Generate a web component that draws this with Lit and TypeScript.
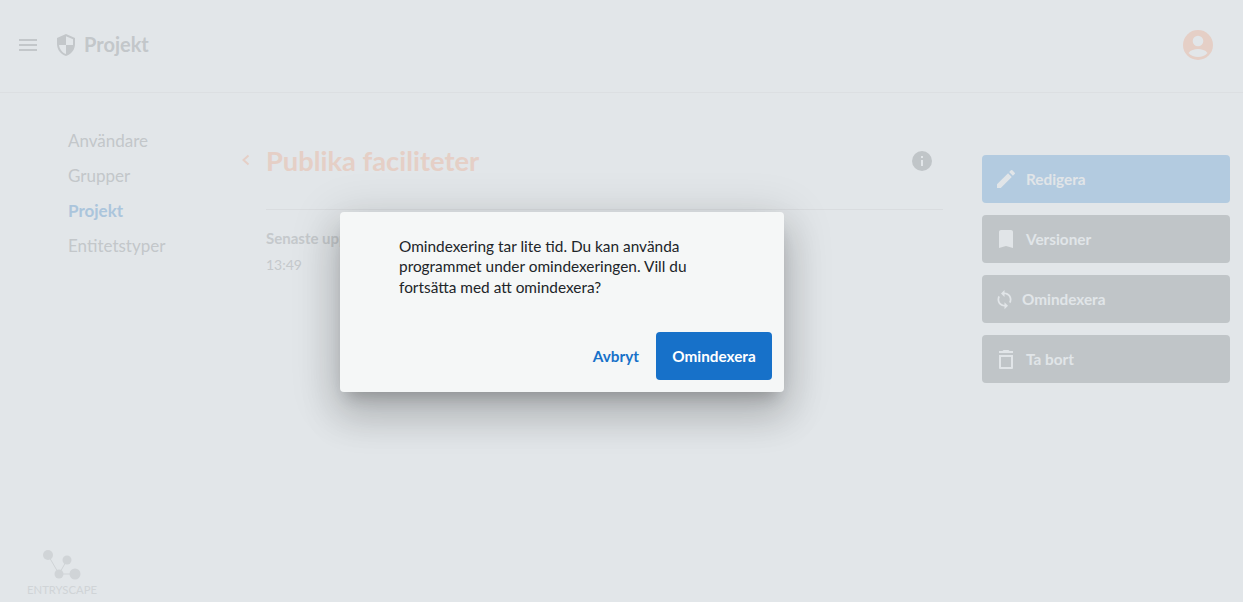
import { LitElement, html, css } from 'lit';
import { customElement } from 'lit/decorators.js';

@customElement('app-root')
export class AppRoot extends LitElement {
  static styles = css`
    :host {
      display: block;
      position: relative;
      width: 1243px;
      height: 602px;
      overflow: hidden;
      background: #e2e6e9;
      font-family: Lato, 'Noto Sans', sans-serif;
    }

    .header {
      height: 93px;
      border-bottom: 1px solid #dcdfe2;
      display: flex;
      align-items: center;
      padding: 0 18px 2px 19px;
      box-sizing: border-box;
    }

    .menu {
      width: 20px;
      height: 20px;
    }

    .shield {
      width: 24px;
      height: 24px;
      margin-left: 15px;
      transform: scaleX(-1);
    }

    .app-title {
      margin: 0 0 2px 6px;
      font-size: 20px;
      font-weight: 700;
      color: #c3c7ca;
      flex: 1;
    }

    .avatar {
      width: 30px;
      height: 30px;
      margin-right: 12px;
    }

    .body {
      display: flex;
      height: 509px;
    }

    .side {
      width: 266px;
      box-sizing: border-box;
      padding: 30px 0 0 68px;
      display: flex;
      flex-direction: column;
    }

    .side a {
      display: block;
      height: 35px;
      line-height: 35px;
      font-size: 17px;
      color: #c3c7ca;
    }

    .side a.on {
      color: #abc5dc;
      font-weight: 700;
    }

    .main {
      width: 677px;
    }

    .title-row {
      position: relative;
      height: 117px;
      border-bottom: 1px solid #d9dcdf;
      box-sizing: border-box;
      display: flex;
      align-items: flex-start;
      padding-top: 49px;
    }

    .back {
      position: absolute;
      left: -26px;
      top: 60px;
      width: 12px;
      height: 14px;
    }

    h1 {
      margin: 0;
      flex: 1;
      font-size: 27.3px;
      line-height: 38px;
      font-weight: 700;
      color: #e5cfc6;
    }

    .info {
      width: 20px;
      height: 20px;
      margin: 9px 11px 0 0;
    }

    .meta {
      margin-top: 19px;
      font-size: 14px;
      line-height: 18px;
      color: #c5c9cc;
    }

    .meta b {
      display: block;
      margin-bottom: 9px;
      font-size: 15px;
    }

    .actions {
      width: 248px;
      margin-left: 39px;
      padding-top: 62px;
      display: flex;
      flex-direction: column;
      gap: 12px;
    }

    .btn {
      height: 48px;
      border-radius: 4px;
      background: #c0c5c8;
      color: #e1e5e8;
      font-size: 15.3px;
      font-weight: 700;
      display: flex;
      align-items: center;
      padding-left: 12px;
      box-sizing: border-box;
    }

    .btn.primary {
      background: #b3cbe0;
    }

    .btn svg {
      width: 24px;
      height: 24px;
      margin-right: 8px;
      fill: #e1e5e8;
      flex: none;
    }

    .btn.tight svg {
      width: 21px;
      height: 21px;
      margin-right: 7px;
    }

    .logo {
      position: absolute;
      left: 26px;
      bottom: 6px;
      width: 72px;
      text-align: center;
      font-size: 11.3px;
      line-height: 12px;
      color: #d0d4d7;
    }

    .logo svg {
      display: block;
      width: 72px;
      height: 32px;
      margin-bottom: 3px;
    }

    .dialog {
      position: absolute;
      left: 340px;
      top: 212px;
      width: 444px;
      height: 180px;
      box-sizing: border-box;
      padding: 24px 12px 12px 59px;
      border-radius: 4px;
      background: #f5f7f7;
      box-shadow:
        0 11px 15px -7px rgba(0, 0, 0, 0.2),
        0 24px 38px 3px rgba(0, 0, 0, 0.14),
        0 9px 46px 8px rgba(0, 0, 0, 0.12);
      display: flex;
      flex-direction: column;
    }

    .dialog p {
      margin: 0;
      width: 330px;
      font-size: 15.4px;
      line-height: 20.4px;
      color: #212529;
    }

    .dialog-actions {
      margin-top: auto;
      display: flex;
      justify-content: flex-end;
      align-items: center;
      gap: 17px;
      font-size: 15.3px;
      font-weight: 700;
    }

    .cancel {
      color: #1771c9;
    }

    .confirm {
      width: 116px;
      height: 48px;
      border-radius: 4px;
      background: #1771c9;
      color: #fff;
      display: flex;
      align-items: center;
      justify-content: center;
    }
  `;

  render() {
    return html`
      <div class="header">
        <svg class="menu" viewBox="0 0 20 20" fill="#c3c7ca">
          <rect x="0" y="4" width="18" height="2"></rect>
          <rect x="0" y="9" width="18" height="2"></rect>
          <rect x="0" y="14" width="18" height="2"></rect>
        </svg>
        <svg class="shield" viewBox="0 0 24 24" fill="#c3c7ca">
          <path
            d="M12 1 3 5v6c0 5.55 3.84 10.74 9 12 5.16-1.26 9-6.45 9-12V5l-9-4zm0 10.99h7c-.53 4.12-3.28 7.79-7 8.94V12H5V6.3l7-3.11v8.8z"
          ></path>
        </svg>
        <div class="app-title">Projekt</div>
        <svg class="avatar" viewBox="0 0 30 30">
          <circle cx="15" cy="15" r="15" fill="#e5cfc6"></circle>
          <circle cx="15" cy="11" r="5.300" fill="#e2e6e9"></circle>
          <path
            d="M5.500 23c2-3 6-4 9.500-4s7.500 1 9.500 4c-2 2.500-6 4-9.500 4s-7.500-1.500-9.500-4z"
            fill="#e2e6e9"
          ></path>
        </svg>
      </div>
      <div class="body">
        <nav class="side">
          <a>Användare</a>
          <a>Grupper</a>
          <a class="on">Projekt</a>
          <a>Entitetstyper</a>
        </nav>
        <div class="main">
          <div class="title-row">
            <svg class="back" viewBox="0 0 12 14" fill="none" stroke="#e5cfc6" stroke-width="2">
              <path d="M8.500 2.500 3.500 7l5 4.500"></path>
            </svg>
            <h1>Publika faciliteter</h1>
            <svg class="info" viewBox="0 0 20 20">
              <circle cx="10" cy="10" r="10" fill="#c0c5c8"></circle>
              <rect x="9" y="9" width="2" height="6" fill="#e2e6e9"></rect>
              <rect x="9" y="5" width="2" height="2" fill="#e2e6e9"></rect>
            </svg>
          </div>
          <div class="meta">
            <b>Senaste uppdaterad</b>
            13:49
          </div>
        </div>
        <div class="actions">
          <div class="btn primary">
            <svg viewBox="0 0 24 24">
              <path
                d="M3 17.250V21h3.750L17.810 9.940l-3.750-3.750L3 17.250zM20.710 7.040a1 1 0 0 0 0-1.410l-2.340-2.340a1 1 0 0 0-1.410 0l-1.830 1.830 3.750 3.750 1.830-1.830z"
              ></path>
            </svg>
            Redigera
          </div>
          <div class="btn">
            <svg viewBox="0 0 24 24">
              <path d="M17 3H7c-1.100 0-2 .9-2 2v16l7-2 7 2V5c0-1.100-.9-2-2-2z"></path>
            </svg>
            Versioner
          </div>
          <div class="btn tight">
            <svg viewBox="0 0 24 24">
              <path
                d="M12 4V1L8 5l4 4V6c3.310 0 6 2.690 6 6 0 1.010-.25 1.970-.7 2.800l1.460 1.460A7.930 7.930 0 0 0 20 12c0-4.420-3.580-8-8-8zm0 14c-3.310 0-6-2.690-6-6 0-1.010.25-1.970.7-2.800L5.240 7.740A7.930 7.930 0 0 0 4 12c0 4.420 3.580 8 8 8v3l4-4-4-4v3z"
              ></path>
            </svg>
            Omindexera
          </div>
          <div class="btn">
            <svg viewBox="0 0 24 24">
              <path
                d="M6 22h12a1 1 0 0 0 1-1V8H5v13a1 1 0 0 0 1 1zM7 10h10v10H7V10zM15.500 4l-1-1h-5l-1 1H5v2h14V4z"
              ></path>
            </svg>
            Ta bort
          </div>
        </div>
      </div>
      <div class="logo">
        <svg viewBox="0 0 72 32" fill="#d0d4d7" stroke="#d0d4d7">
          <path d="M22 6l11 19M33 25l8-14M33 25h16" stroke-width="1" fill="none"></path>
          <circle cx="22" cy="6" r="5" stroke="none"></circle>
          <circle cx="41" cy="11" r="4.500" stroke="none"></circle>
          <circle cx="33" cy="25" r="4.500" stroke="none"></circle>
          <circle cx="49" cy="25" r="5.500" stroke="none"></circle>
        </svg>
        ENTRYSCAPE
      </div>
      <div class="dialog">
        <p>
          Omindexering tar lite tid. Du kan använda programmet under
          omindexeringen. Vill du fortsätta med att omindexera?
        </p>
        <div class="dialog-actions">
          <span class="cancel">Avbryt</span>
          <span class="confirm">Omindexera</span>
        </div>
      </div>
    `;
  }
}
